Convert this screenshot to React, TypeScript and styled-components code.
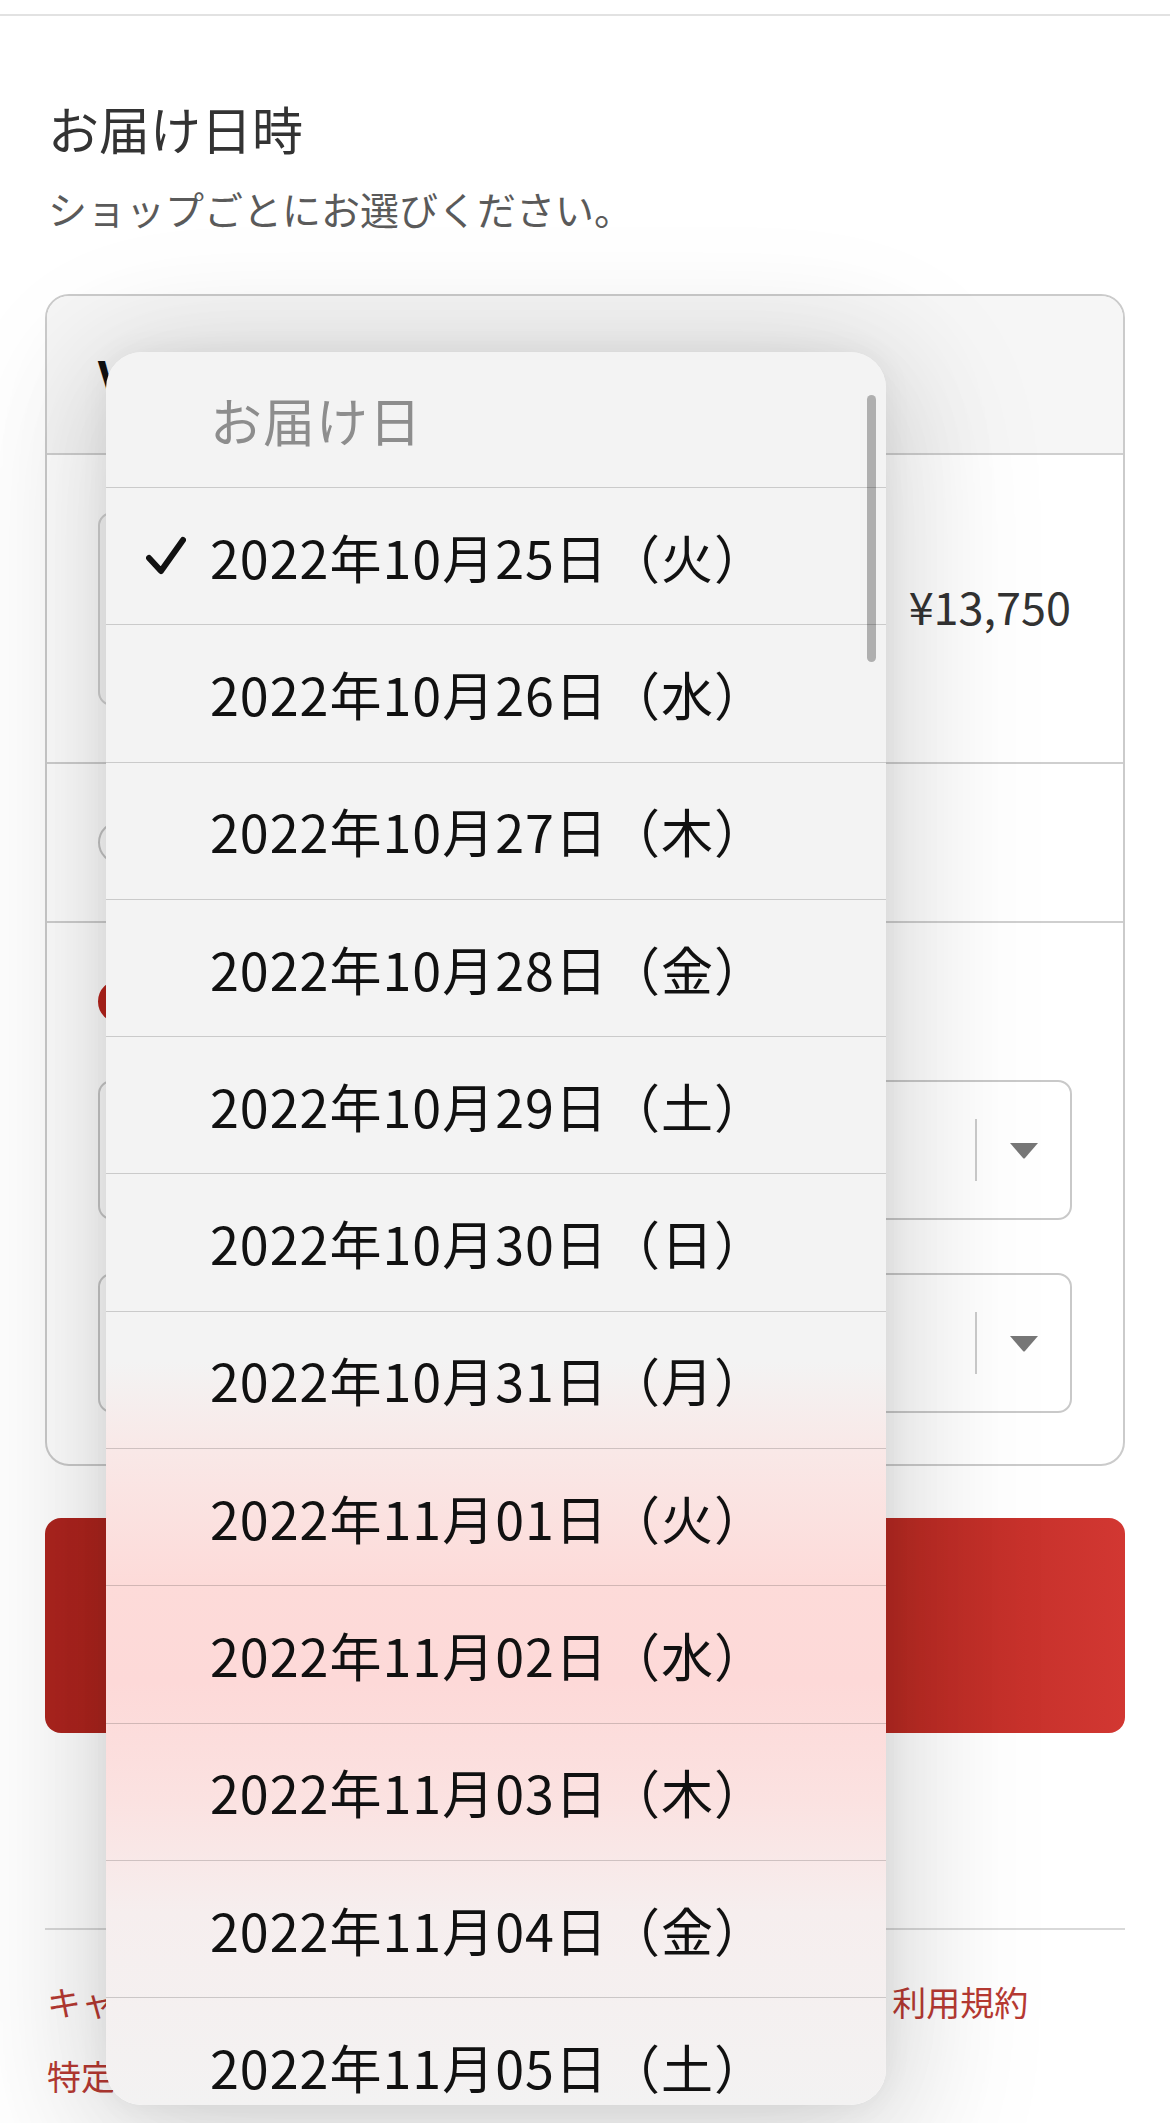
import React from "react";
import styled, { createGlobalStyle } from "styled-components";

const GlobalStyle = createGlobalStyle`
  html, body {
    margin: 0;
    padding: 0;
    background: #ffffff;
  }
  body {
    font-family: "Noto Sans CJK JP", "Noto Sans", sans-serif;
    color: #333;
  }
  * {
    box-sizing: border-box;
  }
`;

const Page = styled.div`
  position: relative;
  width: 1170px;
  height: 2123px;
  overflow: hidden;
  background: #ffffff;
`;

const TopBar = styled.div`
  height: 16px;
  border-bottom: 2px solid #e2e2e2;
  background: #ffffff;
`;

const Main = styled.main`
  padding: 0 45px;
`;

const Title = styled.h1`
  margin: 82px 0 0 3px;
  font-size: 51px;
  line-height: 60px;
  font-weight: 400;
  color: #333;
`;

const Lead = styled.p`
  margin: 25px 0 0 3px;
  font-size: 39px;
  line-height: 50px;
  color: #5a5a5a;
`;

const Card = styled.section`
  margin-top: 61px;
  border: 2px solid #cbcbcb;
  border-radius: 24px;
  overflow: hidden;
  background: #ffffff;
`;

const CardHeader = styled.div`
  height: 159px;
  display: flex;
  align-items: center;
  padding: 0 51px;
  border-bottom: 2px solid #cfcfcf;
  background: #f6f6f6;
  font-size: 46px;
  font-weight: 700;
  color: #111;
`;

const ProductRow = styled.div`
  height: 309px;
  display: flex;
  align-items: center;
  justify-content: space-between;
  padding: 0 52px 0 51px;
  border-bottom: 2px solid #cfcfcf;
`;

const Thumb = styled.div`
  width: 194px;
  height: 194px;
  border: 2px solid #d2d2d2;
  border-radius: 14px;
  background: #fafafa;
`;

const Price = styled.span`
  margin-top: -6px;
  font-size: 45px;
  color: #333;
`;

const OptionRow = styled.div`
  height: 159px;
  display: flex;
  align-items: center;
  gap: 24px;
  padding: 0 51px;
  border-bottom: 2px solid #cfcfcf;
`;

const Radio = styled.span<{ $checked?: boolean }>`
  width: 43px;
  height: 43px;
  flex: none;
  border-radius: 50%;
  background: #ffffff;
  border: ${(p) => (p.$checked ? "13px solid #b8241d" : "2px solid #c6c6c6")};
`;

const OptionLabel = styled.span`
  font-size: 42px;
  color: #333;
`;

const OptionBlock = styled.div`
  display: flex;
  flex-direction: column;
  padding: 57px 51px 51px;
`;

const OptionHead = styled.div`
  display: flex;
  align-items: center;
  gap: 24px;
  height: 43px;
  margin-bottom: 57px;
`;

const SelectBox = styled.div`
  height: 140px;
  display: flex;
  align-items: center;
  border: 2px solid #c9c9c9;
  border-radius: 14px;
  background: #ffffff;
  & + & {
    margin-top: 53px;
  }
`;

const SelectValue = styled.span`
  flex: 1;
  padding-left: 30px;
  font-size: 42px;
  color: #333;
`;

const SelectDivider = styled.span`
  width: 2px;
  height: 62px;
  background: #cccccc;
`;

const CaretSlot = styled.span`
  width: 93px;
  display: flex;
  align-items: center;
  justify-content: center;
  color: #777;
`;

const SubmitButton = styled.button`
  display: flex;
  align-items: center;
  justify-content: center;
  width: 100%;
  height: 215px;
  margin-top: 52px;
  border: none;
  border-radius: 16px;
  background: linear-gradient(90deg, #ad241e 0%, #b3271f 72%, #d23732 100%);
  color: #ffffff;
  font-family: "Noto Sans CJK JP", sans-serif;
  font-size: 46px;
  font-weight: 700;
`;

const Rule = styled.hr`
  margin: 195px 0 0;
  border: none;
  height: 2px;
  background: #d9d9d9;
`;

const Links = styled.nav`
  display: flex;
  flex-wrap: wrap;
  column-gap: 100px;
  margin-top: 35px;
  padding-left: 2px;
`;

const LinkItem = styled.a`
  font-size: 34px;
  line-height: 74px;
  color: #b73a33;
  text-decoration: none;
`;

const Menu = styled.div`
  position: absolute;
  left: 106px;
  top: 352px;
  width: 780px;
  height: 1753px;
  border-radius: 36px;
  overflow: hidden;
  background: linear-gradient(
    180deg,
    #f3f3f3 0px,
    #f3f3f3 1010px,
    #f9e8e7 1100px,
    #fddbd9 1230px,
    #fdd9d8 1330px,
    #fbe2e1 1450px,
    #f6eeee 1560px,
    #f3f2f2 1753px
  );
  box-shadow: 0 0 30px rgba(0, 0, 0, 0.05), 0 16px 120px rgba(0, 0, 0, 0.12),
    0 30px 150px 40px rgba(0, 0, 0, 0.07);
`;

const MenuHeader = styled.div`
  height: 136px;
  display: flex;
  align-items: center;
  padding-left: 104px;
  border-bottom: 1.5px solid rgba(0, 0, 0, 0.17);
  font-size: 52px;
  color: #8d8d8d;
  letter-spacing: 1px;
`;

const MenuRow = styled.div`
  height: 137.3px;
  display: flex;
  align-items: center;
  border-bottom: 1.5px solid rgba(0, 0, 0, 0.17);
  font-size: 52px;
  letter-spacing: 1px;
  color: #111;
`;

const CheckSlot = styled.span`
  width: 104px;
  flex: none;
  display: flex;
  align-items: center;
  padding-left: 40px;
`;

const Scrollbar = styled.span`
  position: absolute;
  top: 43px;
  right: 10px;
  width: 9px;
  height: 267px;
  border-radius: 5px;
  background: rgba(0, 0, 0, 0.28);
`;

const Check = () => (
  <svg width="40" height="40" viewBox="0 0 40 40">
    <polyline
      points="3,22 15,35 37,4"
      fill="none"
      stroke="#111"
      strokeWidth="6"
      strokeLinecap="round"
      strokeLinejoin="round"
    />
  </svg>
);

const Caret = () => (
  <svg width="30" height="17" viewBox="0 0 30 17">
    <path d="M1 1 H29 L16 16 Q15 17 14 16 Z" fill="currentColor" />
  </svg>
);

const week = ["日", "月", "火", "水", "木", "金", "土"];

const dates = (() => {
  const list: string[] = [];
  const start = new Date(2022, 9, 25);
  for (let i = 0; i < 13; i++) {
    const d = new Date(start.getFullYear(), start.getMonth(), start.getDate() + i);
    const mm = String(d.getMonth() + 1);
    const dd = String(d.getDate()).padStart(2, "0");
    list.push(`${d.getFullYear()}年${mm}月${dd}日（${week[d.getDay()]}）`);
  }
  return list;
})();

const Select = ({ value }: { value: string }) => (
  <SelectBox>
    <SelectValue>{value}</SelectValue>
    <SelectDivider />
    <CaretSlot>
      <Caret />
    </CaretSlot>
  </SelectBox>
);

const App: React.FC = () => {
  return (
    <Page>
      <GlobalStyle />
      <TopBar />
      <Main>
        <Title>お届け日時</Title>
        <Lead>ショップごとにお選びください。</Lead>
        <Card>
          <CardHeader>Vintage Select</CardHeader>
          <ProductRow>
            <Thumb />
            <Price>¥13,750</Price>
          </ProductRow>
          <OptionRow>
            <Radio />
            <OptionLabel>最短でお届け</OptionLabel>
          </OptionRow>
          <OptionBlock>
            <OptionHead>
              <Radio $checked />
              <OptionLabel>日時を指定する</OptionLabel>
            </OptionHead>
            <Select value="2022年10月25日（火）" />
            <Select value="指定なし" />
          </OptionBlock>
        </Card>
        <SubmitButton>注文内容の確認へ</SubmitButton>
        <Rule />
        <Links>
          <LinkItem>キャンセルポリシー</LinkItem>
          <LinkItem>プライバシーポリシー</LinkItem>
          <LinkItem>利用規約</LinkItem>
          <LinkItem>特定商取引法に基づく表記</LinkItem>
        </Links>
      </Main>
      <Menu>
        <MenuHeader>お届け日</MenuHeader>
        {dates.map((label, i) => (
          <MenuRow key={label}>
            <CheckSlot>{i === 0 && <Check />}</CheckSlot>
            {label}
          </MenuRow>
        ))}
        <Scrollbar />
      </Menu>
    </Page>
  );
};

export default App;
